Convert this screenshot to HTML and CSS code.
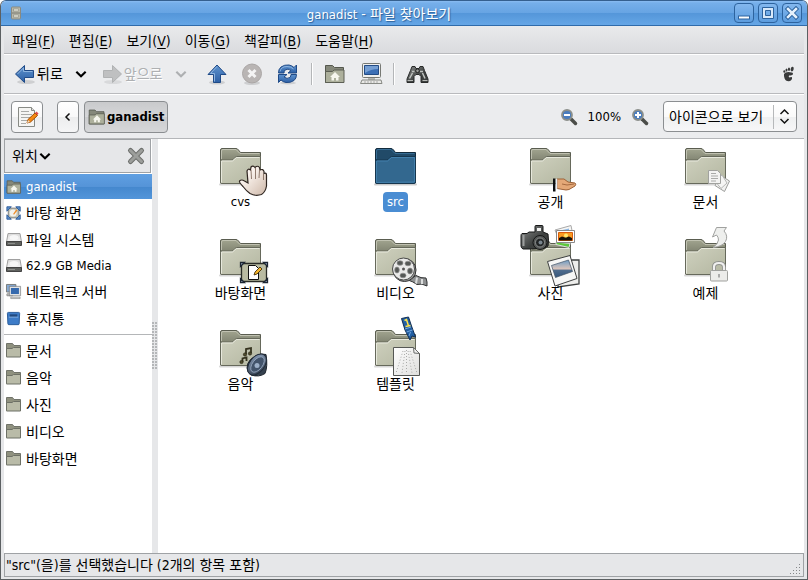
FILE: index.html
```html
<!DOCTYPE html>
<html lang="ko">
<head>
<meta charset="utf-8">
<meta name="viewport" content="width=device-width, initial-scale=1">
<title>ganadist - 파일 찾아보기</title>
<link rel="stylesheet" href="styles.css">
</head>
<body>
<svg class="defs" width="0" height="0" aria-hidden="true">
  <defs>
    <linearGradient id="gFolder" x1="0" y1="0" x2="1" y2="1"><stop offset="0" stop-color="#cfd1bf"/><stop offset="1" stop-color="#b3b6a0"/></linearGradient>
    <linearGradient id="gBack" x1="0" y1="0" x2="0" y2="1"><stop offset="0" stop-color="#a2a590"/><stop offset=".4" stop-color="#7d806e"/></linearGradient>
    <linearGradient id="gBlue" x1="0" y1="0" x2="0" y2="1"><stop offset="0" stop-color="#5f94cf"/><stop offset="1" stop-color="#2c5fa5"/></linearGradient>
    <linearGradient id="gPaper" x1="0" y1="0" x2="1" y2="1"><stop offset="0" stop-color="#fff"/><stop offset="1" stop-color="#dededc"/></linearGradient>
    <linearGradient id="gHand" x1="0" y1="0" x2="1" y2="1"><stop offset=".3" stop-color="#fbf4ee"/><stop offset="1" stop-color="#cdb7a8"/></linearGradient>
    <linearGradient id="gDark" x1="0" y1="0" x2="1" y2="1"><stop offset="0" stop-color="#8b8d8c"/><stop offset=".6" stop-color="#3d403f"/></linearGradient>
    <linearGradient id="gSky" x1="0" y1="0" x2="0" y2="1"><stop offset="0" stop-color="#6d9bc4"/><stop offset=".5" stop-color="#d9c4bb"/><stop offset=".6" stop-color="#4e6b8c"/><stop offset="1" stop-color="#36577d"/></linearGradient>
    <linearGradient id="gSpeaker" x1="0" y1="0" x2="1" y2="1"><stop offset="0" stop-color="#8ea2bd"/><stop offset="1" stop-color="#2b3747"/></linearGradient>
    <linearGradient id="gDrive" x1="0" y1="0" x2="0" y2="1"><stop offset="0" stop-color="#d9d9d9"/><stop offset="1" stop-color="#f6f6f6"/></linearGradient>
  </defs>
  <symbol id="folder" viewBox="0 0 65 53" overflow="visible">
    <path d="M12 45.500h41" stroke="#000" stroke-opacity=".16" stroke-width="2" stroke-linecap="round"/>
    <path d="M12.500 44V11q0-1.500 1.500-1.500h14q1.500 0 2.500 1.500l2 2.500h20V44z" fill="url(#gBack)" stroke="#5a5d50"/>
    <path d="M13.500 20v-8q0-1.500 1.500-1.500h13l4 4h19.500" fill="none" stroke="#c9cbbc" stroke-opacity=".8"/>
    <path d="M12.500 44V22.500q0-1.500 1.500-1.500h9.500q1.500 0 2.500-1.500t2.500-2h24v25q0 2-1.500 2H14q-1.500 0-1.500-1z" fill="url(#gFolder)" stroke="#66695b"/>
    <path d="M13.500 43.500V22h11l4-3.500h23" fill="none" stroke="#e7e8dc"/>
  </symbol>
  <symbol id="folder-selected" viewBox="0 0 65 53" overflow="visible">
    <path d="M12 45.500h41" stroke="#000" stroke-opacity=".2" stroke-width="2" stroke-linecap="round"/>
    <path d="M12.500 44V11q0-1.500 1.500-1.500h14q1.500 0 2.500 1.500l2 2.500h20V44z" fill="#214a68" stroke="#122b3d"/>
    <path d="M13.500 20v-8q0-1.500 1.500-1.500h13l4 4h19.500" fill="none" stroke="#376d95"/>
    <path d="M12.500 44V22.500q0-1.500 1.500-1.500h9.500q1.500 0 2.500-1.500t2.500-2h24v25q0 2-1.500 2H14q-1.500 0-1.500-1z" fill="#33688f" stroke="#16364e"/>
    <path d="M13.500 43.500V22h11l4-3.500h23v24.500z" fill="none" stroke="#427fab"/>
  </symbol>
  <symbol id="mini-folder" viewBox="0 0 16 16">
    <path d="M.5 13.500V.5h6l1.500 2h6.500v11z" fill="#8f917f" stroke="#70736a"/>
    <path d="M.5 13.500v-8h5.500l1.500-1h7v9.500H.5z" fill="#b9bba8" stroke="#6d7066"/>
  </symbol>
  <symbol id="home-folder" viewBox="0 0 22 22">
    <path d="M1.500 19.500v-17h7l2 2h9v15z" fill="#85887a" stroke="#55584e"/>
    <path d="M1.500 19.500v-11h7l1.500-1.500h10v12.500z" fill="#adb09c" stroke="#5c5f54"/>
    <path d="M11 9l5 5h-1.500v3.500h-2.500v-2.500h-2v2.500H7.500V14H6z" fill="#f6f6ee"/>
  </symbol>
  <symbol id="drive" viewBox="0 0 16 16">
    <path d="M2 1.500h12l1.500 8.500H.5z" fill="url(#gDrive)" stroke="#a0a0a0"/>
    <ellipse cx="8" cy="5.500" rx="4.500" ry="2.500" fill="#fafafa" opacity=".8"/>
    <path d="M.5 9.500h15v4H.5z" fill="#60625f" stroke="#444"/>
    <path d="M2 11.500h7" stroke="#8d8f8c"/>
  </symbol>
  <symbol id="chevron" viewBox="0 0 12 12"><path d="M2 4l4 4 4-4" fill="none" stroke="currentColor" stroke-width="1.800"/></symbol>
  <symbol id="arrow-right" viewBox="0 0 24 24">
    <ellipse cx="13" cy="20" rx="9" ry="2" fill="#000" opacity=".08"/>
    <path d="M3.500 8.500h9v-5l9 8.500-9 8.500v-5h-9z" fill="#bfc0c1" stroke="#b0b2b3"/>
  </symbol>
</svg>

<div class="window">
  <header class="titlebar">
    <svg class="app-icon" width="16" height="16" viewBox="0 0 16 16" aria-hidden="true"><rect x="3.500" y="2" width="9" height="12" rx="1" fill="#b9b9ab" stroke="#8a8a80"/><path d="M4 8h8" stroke="#77776d"/><rect x="5.500" y="4" width="5" height="2" fill="#ececdf" stroke="#88887d" stroke-width=".6"/><rect x="5.500" y="10" width="5" height="2" fill="#ececdf" stroke="#88887d" stroke-width=".6"/></svg>
    <h1 class="title"><span class="latin">ganadist</span> - 파일 찾아보기</h1>
    <div class="window-buttons">
      <button type="button" aria-label="최소화"><svg width="18" height="18" viewBox="0 0 18 18"><rect x="3.500" y="12" width="11" height="3" fill="#fff" stroke="#2d639e"/></svg></button>
      <button type="button" aria-label="최대화"><svg width="18" height="18" viewBox="0 0 18 18"><path d="M3.500 3.500h11v11h-11zM6.500 6.500v5h5v-5z" fill="#d8e8f9" fill-rule="evenodd" stroke="#2d639e"/></svg></button>
      <button type="button" aria-label="닫기"><svg width="18" height="18" viewBox="0 0 18 18"><path d="M5 5l8 8M13 5l-8 8" stroke="#2d639e" stroke-width="4.500" stroke-linecap="square"/><path d="M5 5l8 8M13 5l-8 8" stroke="#e4f0fc" stroke-width="2.500" stroke-linecap="square"/></svg></button>
    </div>
  </header>

  <div class="frame">
    <nav class="menubar" aria-label="메뉴">
      <button type="button">파일(<u>F</u>)</button>
      <button type="button">편집(<u>E</u>)</button>
      <button type="button">보기(<u>V</u>)</button>
      <button type="button">이동(<u>G</u>)</button>
      <button type="button">책갈피(<u>B</u>)</button>
      <button type="button">도움말(<u>H</u>)</button>
    </nav>

    <div class="toolbar">
      <button type="button" class="nav-button"><svg width="24" height="24" viewBox="0 0 24 24"><ellipse cx="13" cy="20" rx="9" ry="2" fill="#000" opacity=".12"/><path d="M20.500 8.500h-9v-5L2.500 12l9 8.500v-5h9z" fill="url(#gBlue)" stroke="#1f4a87"/><path d="M4.500 12l6-6v3.500h9" fill="none" stroke="#8db4df"/></svg>뒤로</button>
      <button type="button" class="drop" aria-label="뒤로 기록"><svg width="14" height="14"><use href="#chevron"/></svg></button>
      <button type="button" class="nav-button" disabled><svg width="24" height="24"><use href="#arrow-right"/></svg>앞으로</button>
      <button type="button" class="drop" aria-label="앞으로 기록" disabled><svg width="14" height="14"><use href="#chevron"/></svg></button>
      <button type="button" class="tool" aria-label="위로"><svg width="24" height="24" viewBox="0 0 24 24"><ellipse cx="12" cy="20.500" rx="8" ry="2" fill="#000" opacity=".12"/><path d="M8.500 20.500v-8h-5.500L12 3l9 9.500h-5.500v8z" fill="url(#gBlue)" stroke="#1f4a87"/><path d="M9.500 19.500v-8h-4L12 4.500" fill="none" stroke="#8db4df"/></svg></button>
      <button type="button" class="tool" aria-label="멈춤" disabled><svg width="24" height="24" viewBox="0 0 24 24"><ellipse cx="11" cy="21" rx="8" ry="2" fill="#000" opacity=".12"/><circle cx="11" cy="11.500" r="9.500" fill="#b9b5b4" stroke="#aaa6a5"/><path d="M7.500 8l7 7M14.500 8l-7 7" stroke="#f4f4f4" stroke-width="3"/></svg></button>
      <button type="button" class="tool" aria-label="새로 고침"><svg width="24" height="24" viewBox="0 0 24 24"><ellipse cx="11" cy="21" rx="8" ry="1.500" fill="#000" opacity=".12"/><path d="M1.500 11q0-4 2.500-6 3.500-2.500 8-2 3 .5 5 2.500l2.500-2.500v8h-8.500l3-2.500q-3-2.500-6-.5-1 1.500-1 3z" fill="url(#gBlue)" stroke="#1f4a87"/><path d="M19.500 12.500q0 4-2.500 6-3.500 2.500-8 2-3-.5-5-2.500l-2.500 2.500v-8H10l-3 2.500q3 2.500 6 .5 1-1.500 1-3z" fill="url(#gBlue)" stroke="#1f4a87"/><path d="M3 9.500q1-5 7-5 4 0 6.500 2.500" fill="none" stroke="#8db4df"/></svg></button>
      <span class="separator"></span>
      <button type="button" class="tool" aria-label="내 폴더"><svg width="22" height="22"><use href="#home-folder"/></svg></button>
      <button type="button" class="tool" aria-label="컴퓨터"><svg width="24" height="24" viewBox="0 0 24 24"><rect x="3.500" y="1.500" width="18" height="14" rx="1" fill="#f0f0ee" stroke="#777974"/><path d="M5.500 3.500h14v9h-14z" fill="#3c6fb5" stroke="#244c85"/><path d="M6 4h13v3q-7 0-13 4z" fill="#769fd3"/><path d="M9 16h7v2H9z" fill="#b5b6b2"/><path d="M3 18h19l1 3.500H1.500z" fill="#e9e9e6" stroke="#888a85"/><path d="M5 20h15" stroke="#aaa" stroke-dasharray="2 1"/></svg></button>
      <span class="separator"></span>
      <button type="button" class="tool" aria-label="찾기"><svg width="24" height="24" viewBox="0 0 24 24"><path d="M7 4.500h3l1 2h3l1-2h3l1.500 4 3.500 8.500v3.500h-7v-6l-2-2h-3l-2 2v6H2V17l3.500-8.500z" fill="url(#gDark)" stroke="#292b2a"/><path d="M7 9.500h2.500M15 9.500h3M7.500 11l-3 5.500M17.500 11l2.500 5.500" stroke="#bfc2bf" stroke-width="1.500"/><path d="M2.500 18.500h5.500M17.500 18.500h5" stroke="#b5b7b4"/><circle cx="12.500" cy="8.800" r="1.800" fill="#9b9d9a" stroke="#222"/></svg></button>
      <svg class="foot" width="16" height="16" viewBox="0 0 16 16" aria-hidden="true"><path d="M3 8q1-2 4.500-2 4 0 4.500 1.500.2 2-4 2-.8 1.500.5 2 1.500-1 2.500-.2.500 3-3 4-3.500.2-4.500-3-.800-2.500-.5-4.300z" fill="#3a3b3b"/><ellipse cx="3.300" cy="5.500" rx="1" ry="1.300" fill="#3a3b3b"/><ellipse cx="5.500" cy="4" rx="1" ry="1.500" fill="#3a3b3b"/><ellipse cx="8" cy="3.200" rx="1.100" ry="1.700" fill="#3a3b3b"/><ellipse cx="11.200" cy="3" rx="1.500" ry="2.400" transform="rotate(12 11 3)" fill="#3a3b3b"/></svg>
    </div>

    <div class="locationbar">
      <button type="button" class="box edit" aria-label="위치 편집"><svg width="24" height="24" viewBox="0 0 24 24"><path d="M3.500 2.500h13l3 3v16h-16z" fill="#f5f5f3" stroke="#888a85"/><path d="M16.500 2.500v3h3" fill="#ddd" stroke="#888a85"/><path d="M6 6.500h8M6 9.500h11M6 12.500h10M6 15.500h7M6 18.500h5" stroke="#aaaba8"/><path d="M12 18l1-3.500 7-6.500 2.500 2.500-7 6.500z" fill="#f58a12" stroke="#a14b05"/><path d="M20 8l1.500-1.500 2 2-1 1.500z" fill="#df4a4a"/><path d="M12 18l1-3 2 2z" fill="#f2dfc4"/></svg></button>
      <button type="button" class="box step" aria-label="이전 경로"><svg width="10" height="12" viewBox="0 0 10 12"><path d="M6.500 2.500L3 6l3.500 3.500" fill="none" stroke="#111" stroke-width="1.500"/></svg></button>
      <button type="button" class="box path" aria-pressed="true"><svg width="18" height="18"><use href="#home-folder"/></svg>ganadist</button>
      <div class="zoom">
        <button type="button" class="plain" aria-label="축소"><svg width="18" height="18" viewBox="0 0 18 18"><path d="M11 11l4.500 4.500" stroke="#4b4d49" stroke-width="3.500" stroke-linecap="round"/><circle cx="7" cy="7" r="5" fill="#4a7dbf" stroke="#8b8f8a" stroke-width="1.800"/><path d="M4 7h6" stroke="#fff" stroke-width="2"/></svg></button>
        <output>100%</output>
        <button type="button" class="plain" aria-label="확대"><svg width="18" height="18" viewBox="0 0 18 18"><path d="M11 11l4.500 4.500" stroke="#4b4d49" stroke-width="3.500" stroke-linecap="round"/><circle cx="7" cy="7" r="5" fill="#4a7dbf" stroke="#8b8f8a" stroke-width="1.800"/><path d="M4 7h6M7 4v6" stroke="#fff" stroke-width="2"/></svg></button>
      </div>
      <label class="view-select">
        <select aria-label="보기 방식"><option>아이콘으로 보기</option><option>목록으로 보기</option></select>
        <svg width="24" height="24" viewBox="0 0 24 24" aria-hidden="true"><path d="M1.500 0v24" stroke="#b6b8ba"/><path d="M8.500 9l4-4 4 4M8.500 14l4 4 4-4" fill="none" stroke="#111" stroke-width="1.500"/></svg>
      </label>
    </div>

    <div class="panes">
      <aside class="sidebar">
        <div class="side-header">
          <button type="button" class="plain places">위치<svg width="14" height="14"><use href="#chevron"/></svg></button>
          <button type="button" class="plain" aria-label="가장자리 창 닫기"><svg width="18" height="18" viewBox="0 0 18 18"><path d="M3.500 3.500l11 11M14.500 3.500l-11 11" stroke="#6d6f6c" stroke-width="5" stroke-linecap="round"/><path d="M3.500 3.500l11 11M14.500 3.500l-11 11" stroke="#9c9e9b" stroke-width="3" stroke-linecap="round"/></svg></button>
        </div>
        <ul class="places-list">
          <li><a href="#" class="short selected"><svg width="16" height="16"><use href="#home-folder"/></svg><span class="latin">ganadist</span></a></li>
          <li><a href="#"><svg width="16" height="16" viewBox="0 0 18 18"><rect x="2.500" y="3.500" width="12" height="11" fill="#c3c4b6" stroke="#777"/><circle cx="8" cy="9" r="4" fill="#f2f2ee"/><path d="M8 10l3.500-5 1.500 1-4 5z" fill="#f08a24"/><path d="M1 2h5L1 7zM16 2v5l-5-5zM1 16v-5l5 5zM16 16h-5l5-5z" fill="#5b8cc9" stroke="#2b5a98"/></svg>바탕 화면</a></li>
          <li><a href="#"><svg width="16" height="16"><use href="#drive"/></svg>파일 시스템</a></li>
          <li><a href="#" class="short"><svg width="16" height="16"><use href="#drive"/></svg><span class="latin">62.9 GB Media</span></a></li>
          <li><a href="#"><svg width="16" height="16" viewBox="1 1 17 17"><path d="M1.500 1.500h10v8h-10z" fill="#84a9d4" stroke="#777a78"/><path d="M2 11.500h6v2H2z" fill="#d8d8d6" stroke="#888"/><path d="M5.500 4.500h10v8h-10z" fill="#3569ad" stroke="#e0e2e3" stroke-width="1.500"/><path d="M4.500 3.500h12v10h-12z" fill="none" stroke="#6f7375" stroke-width=".7"/><path d="M6 15h10v1.500H6z" fill="#ddd" stroke="#858785" stroke-width=".7"/></svg>네트워크 서버</a></li>
          <li><a href="#"><svg width="16" height="16" viewBox="1 1 17 17"><path d="M2.500 3.500q0-1 1-1h11q1 0 1 1l-.500 11q0 1-1 1H4q-1 0-1-1z" fill="#3d7cc8" stroke="#285a97"/><path d="M5 4.500h8v3H5z" fill="#214a80"/><path d="M4 7.500h10" stroke="#86b2e4"/></svg>휴지통</a></li>
        </ul>
        <ul class="places-list bookmarks">
          <li><a href="#"><svg width="16" height="16"><use href="#mini-folder"/></svg>문서</a></li>
          <li><a href="#"><svg width="16" height="16"><use href="#mini-folder"/></svg>음악</a></li>
          <li><a href="#"><svg width="16" height="16"><use href="#mini-folder"/></svg>사진</a></li>
          <li><a href="#"><svg width="16" height="16"><use href="#mini-folder"/></svg>비디오</a></li>
          <li><a href="#"><svg width="16" height="16"><use href="#mini-folder"/></svg>바탕화면</a></li>
        </ul>
      </aside>
      <div class="splitter"><span class="grip"></span></div>

      <main class="files">
        <a href="#" class="file"><svg width="65" height="53" viewBox="0 0 65 53"><use href="#folder"/>
          <path d="M42 54.500q-4-3-7-7-4-4-3.500-5.500 2-2 5 0l3.500 2-1-12q1-3 3.500-1l.500-3q2-2 4 .5 2.500-2.500 4.500 0l.5 2.500q3-1.500 4 1.500v2q2.500-1 2.500 1.500v11q-1 6-5 8.500-6 2-11.500-1z" fill="url(#gHand)" stroke="#2f2621" stroke-width="1.200"/><path d="M43 31l.5 9M47.500 29v11M51.500 31l-.500 8M55.500 35v6" stroke="#8f7a6d" fill="none"/></svg><span class="name latin">cvs</span></a>
        <a href="#" class="file selected"><svg width="65" height="53"><use href="#folder-selected"/></svg><span class="name latin">src</span></a>
        <a href="#" class="file"><svg width="65" height="53" viewBox="0 0 65 53"><use href="#folder"/>
          <path d="M39 40h7l4 3 7 1q1.500 1 0 3l-6 3.500q-3 1-6 0l-6-1z" fill="#e4a877" stroke="#9d6238"/><path d="M44 45q4 2 12 0" fill="none" stroke="#a66a40"/><path d="M35 39.500h2.500v13H35z" fill="#0e1012"/><path d="M38.500 40v10" stroke="#e8eff6" stroke-width="1.500"/></svg><span class="name">공개</span></a>
        <a href="#" class="file"><svg width="65" height="53" viewBox="0 0 65 53"><use href="#folder"/>
          <path d="M48.500 37l8 5-5 10.500-9.500-6z" fill="#f2f2f1" stroke="#9b9c9a"/><path d="M42 42l7-6 5 8-6 5.500z" fill="#f5f5f4" stroke="#b5b6b4"/><path d="M35.500 31.500h9l3 3v10h-12z" fill="#f3f3f2" stroke="#a1a29f"/><path d="M38 34.500h5M38 37h7M38 39.500h7M38 42h5" stroke="#a9aaa8"/></svg><span class="name">문서</span></a>
        <a href="#" class="file"><svg width="65" height="53" viewBox="0 0 65 53"><use href="#folder"/>
          <rect x="33.500" y="33.500" width="25" height="18" rx="1" fill="#b9bba2" stroke="#2a2c27" stroke-width="1.300"/><path d="M32.500 32.500h4l-4 4zM59.500 32.500v4l-4-4zM32.500 52.500v-4l4 4zM59.500 52.500h-4l4-4z" fill="#a9bad2" stroke="#1c2532" stroke-width="1.300"/><path d="M40.500 35.500h7l3 3v11h-10z" fill="#fff" stroke="#111"/><path d="M46 45l1-3 5-5 2 2-5 5z" fill="#f3b32a" stroke="#332100" stroke-width=".8"/></svg><span class="name">바탕화면</span></a>
        <a href="#" class="file"><svg width="65" height="53" viewBox="0 0 65 53"><use href="#folder"/>
          <path d="M45 50q5-2 8-4.500 5 3 10 2.500 1.500 4 1 8-5-3-10-1.500-4-3-9-4.500z" fill="#8f9192" stroke="#2f3132"/><path d="M54 47.500l-1 6M59 49v5" stroke="#dcdede" stroke-width="2"/><circle cx="41.500" cy="40" r="11.500" fill="#9a9c9b" stroke="#333"/><circle cx="40.500" cy="39" r="11" fill="#e9e9e8" stroke="#4a4b4a"/><g fill="#555856" stroke="#90918f" stroke-width=".7"><ellipse cx="37" cy="33" rx="3" ry="2.300"/><ellipse cx="45" cy="33.500" rx="3" ry="2.300"/><ellipse cx="47" cy="41" rx="2.500" ry="3"/><ellipse cx="40" cy="45.500" rx="3" ry="2.300"/><ellipse cx="34" cy="40" rx="2.300" ry="3"/></g><circle cx="40.500" cy="39" r="1.500" fill="#555"/></svg><span class="name">비디오</span></a>
        <a href="#" class="file"><svg width="65" height="53" viewBox="0 0 65 53"><use href="#folder"/>
          <path d="M37 0l16-4.500 3 15-13 4z" fill="#f6f6f5" stroke="#aaa"/><path d="M40 1l11-2.500v4H40z" fill="#8fb7e2"/><path d="M38 12l14 1.500-1 4-13-3z" fill="#5ec73c" stroke="#ddd"/><path d="M38.500 .5h18v12h-18z" fill="#fff" stroke="#888"/><path d="M40.500 2.500h14v8h-14z" fill="#f89a21" stroke="#d95c0c"/><path d="M41 8l3-1.500 3 1 4-1 3 1.500v2.500H41z" fill="#161207"/><circle cx="48" cy="5.500" r="2" fill="#ffe96b"/>
          <path d="M4 3.500h5l2-1.500h6v-5.500q0-1 1-1h6q1 0 1 1V2l5 2q1 7 0 12l-3 2-15 1H5q-2-1-2-3V6q0-2 1-2.500z" fill="url(#gDark)" stroke="#171818"/><path d="M19 -2h4v3h-4z" fill="#f0f1f0"/><path d="M5.500 5v11" stroke="#9c9e9d" stroke-width="2"/><circle cx="22" cy="12.500" r="7" fill="#555857" stroke="#161717"/><circle cx="22" cy="12.500" r="4.500" fill="#222526" stroke="#8b8e8d"/><circle cx="22.500" cy="12.500" r="2" fill="#79858e"/>
          <path d="M39 30h22v24l-21 3z" fill="#ededeb" stroke="#3e4040" stroke-width="1.300"/><path d="M29.500 31.500l22.500-6 7 23-22 7.500z" fill="#f7f7f6" stroke="#3e4040"/><path d="M33.500 35.500l17-5.500 4 11.500-17 6z" fill="url(#gSky)" stroke="#425264" stroke-width=".7"/></svg><span class="name">사진</span></a>
        <a href="#" class="file"><svg width="65" height="53" viewBox="0 0 65 53"><use href="#folder"/>
          <path d="M43.500 -2.500h10l-2.500 3.500q4.500 5 1.500 10.500-3 5-12.500 6 5-3.500 5.500-7.500 0-3-2-5l-4 2z" fill="#eeefed" stroke="#a0a19f"/><path d="M41 41v-4q0-4 5-4t5 4v4" fill="none" stroke="#8f918d" stroke-width="4"/><path d="M41 41v-4q0-4 5-4t5 4v4" fill="none" stroke="#f0f0ef" stroke-width="2.200"/><rect x="37.500" y="40.500" width="17" height="10.500" rx="1" fill="#ececea" stroke="#a0a19e"/><path d="M46 44v3.500" stroke="#aaa" stroke-width="2"/></svg><span class="name">예제</span></a>
        <a href="#" class="file"><svg width="65" height="53" viewBox="0 0 65 53"><use href="#folder"/>
          <path d="M38 33v-5l5-1v5M34.500 41v-3.500l4-1v3.500" fill="none" stroke="#35331f" stroke-width="1.800"/><g fill="#4e4b2b" stroke="#2c2a18" stroke-width=".8"><circle cx="37" cy="33.500" r="1.600"/><circle cx="42" cy="32.500" r="1.600"/><circle cx="33.500" cy="41" r="1.600"/></g><path d="M39 47q0-10 14-14l5 .5q2 12-1 19-6 4-14 1.500-4-3-4-7z" fill="#35414f" stroke="#1c232c"/><ellipse cx="49" cy="43.500" rx="7.500" ry="12" transform="rotate(38 49 43.500)" fill="url(#gSpeaker)" stroke="#222c3a"/><ellipse cx="49.500" cy="43.500" rx="5" ry="9" transform="rotate(38 49.500 43.500)" fill="#43546b" stroke="#9aabc3" stroke-width=".8"/><circle cx="49" cy="44.500" r="2.500" fill="#9cafc8"/></svg><span class="name">음악</span></a>
        <a href="#" class="file"><svg width="65" height="53" viewBox="0 0 65 53"><use href="#folder"/>
          <path d="M38.500 -2.500l7-1.500 3 9 4 11-3.500-1-2 4-5-10z" fill="#2360a4" stroke="#0f2d54"/><path d="M42 8l6-2M43.500 11l6-2M46 15l1.500-4" stroke="#74a6df"/><path d="M41.500 -.500l2-1 2 6.500M42.500 5.500l5-1" stroke="#ffe24a" stroke-width="1.500" fill="none"/>
          <path d="M30.500 26.500h20l6 6v22h-26z" fill="url(#gPaper)" stroke="#555754"/><path d="M50.500 26.500l.5 5.500 5.500.5z" fill="#eee" stroke="#6b6d6a"/><path d="M43.500 29v24M40 30l-7 22M47 30l7 22M42 30l-3 22M45 30l4 22" stroke="#a9aaa8" stroke-dasharray="1 2"/></svg><span class="name">템플릿</span></a>
      </main>
    </div>

    <footer class="statusbar"><span>"src"(을)를 선택했습니다 (2개의 항목 포함)</span>
      <svg width="12" height="12" viewBox="0 0 12 12" aria-hidden="true"><path d="M9 1h1v1H9zM6 4h1v1H6zM9 4h1v1H9zM3 7h1v1H3zM6 7h1v1H6zM9 7h1v1H9zM0 10h1v1H0zM3 10h1v1H3zM6 10h1v1H6zM9 10h1v1H9z" fill="#85888a"/></svg>
    </footer>
  </div>
</div>
</body>
</html>
```
FILE: styles.css
```css
* { box-sizing: border-box; }

body {
  margin: 0;
  background: #fff;
  color: #000;
  font: 14px/20px "DejaVu Sans Condensed", "Noto Sans CJK KR", sans-serif;
}

button {
  display: inline-flex;
  align-items: center;
  justify-content: center;
  margin: 0;
  padding: 0;
  border: 0;
  background: none;
  color: inherit;
  font: inherit;
}

svg { display: block; flex: none; overflow: visible; }
a { color: inherit; text-decoration: none; }
.defs { position: absolute; }
.latin { font-size: 13px; }

.window {
  display: flex;
  flex-direction: column;
  min-height: 100vh;
  border: 1px solid #5c6062;
  border-top-color: #35608f;
  border-radius: 6px 6px 0 0;
  background: #e6e7e9;
  overflow: hidden;
}

/* Title bar */
.titlebar {
  display: flex;
  align-items: center;
  height: 25px;
  padding: 0 5px 0 7px;
  border-bottom: 1px solid #2f6baa;
  background: linear-gradient(#8abcf2 0, #76afea 2px, #67a4e3 12px, #5496d9 12px, #65a6e6 100%);
}
.title {
  flex: 1;
  margin: 0;
  padding-top: 2px;
  color: #fff;
  font-size: 14px;
  font-weight: 400;
  text-align: center;
  text-shadow: 1px 1px 1px #2c5f98;
}
.window-buttons { display: flex; gap: 4px; }
.window-buttons button {
  width: 20px;
  height: 20px;
  border: 1px solid #2d639e;
  border-radius: 4px;
  background: linear-gradient(#83b7ee, #5c9cde);
}

.frame {
  display: flex;
  flex: 1;
  flex-direction: column;
  padding: 0 3px 2px;
}

/* Menu bar */
.menubar {
  display: flex;
  gap: 14px;
  height: 28px;
  padding: 2px 8px 0;
  border-bottom: 1px solid #b9babd;
  background: linear-gradient(#e9eaec, #dadbde);
}
.menubar u { text-underline-offset: 2px; }

/* Tool bar */
.toolbar {
  display: flex;
  align-items: center;
  height: 40px;
  padding: 0 7px 0 9px;
  border-top: 1px solid #fff;
  border-bottom: 1px solid #b9babd;
  background: #ebecee;
}
.toolbar button { height: 32px; }
.toolbar button:disabled { color: #aeb0b2; text-shadow: 1px 1px 0 #fff; }
.drop { width: 37px; }
.tool { width: 36px; }
.separator {
  width: 2px;
  height: 22px;
  margin: 0 4px;
  border-left: 1px solid #b4b6b8;
  background: #fff;
}
.foot { margin-left: auto; }

/* Location bar */
.locationbar {
  display: flex;
  align-items: center;
  height: 45px;
  padding: 0 7px;
  border-top: 1px solid #fff;
  border-bottom: 1px solid #b4b6b9;
  background: #ebecee;
}
.box {
  height: 32px;
  border: 1px solid #8b8e91;
  border-radius: 4px;
  background: linear-gradient(#fff 0, #f8f8f9 50%, #ecedee 50%, #f5f5f6 100%);
}
.edit { width: 32px; }
.step { width: 22px; margin: 0 5px 0 14px; }
.path {
  gap: 1px;
  padding: 0 3px;
  background: linear-gradient(#c9cacc 0, #d6d7d9 50%, #cbccce 50%, #d6d7d9 100%);
  font-size: 13px;
  font-weight: 700;
}
.zoom {
  display: flex;
  align-items: center;
  gap: 10px;
  margin-left: auto;
  margin-right: 14px;
  font-size: 13px;
}
.view-select { position: relative; width: 134px; }
.view-select select {
  width: 100%;
  height: 31px;
  margin: 0;
  padding: 0 0 0 5px;
  border: 1px solid #8b8e91;
  border-radius: 4px;
  appearance: none;
  background: linear-gradient(#fff 0, #fafafa 50%, #eeeff0 50%, #f7f7f8 100%);
  color: #000;
  font: inherit;
}
.view-select svg {
  position: absolute;
  top: 4px;
  right: 1px;
  pointer-events: none;
}

/* Panes */
.panes { display: flex; flex: 1; background: #fff; }
.sidebar { flex: none; width: 148px; }
.side-header {
  display: flex;
  align-items: center;
  justify-content: space-between;
  height: 34px;
  margin: 0 1px 1px 0;
  padding: 0 5px 0 7px;
  border: 1px solid #9fa2a5;
  background: #e6e7e9;
}
.places-list { margin: 0; padding: 0; list-style: none; }
.places-list a {
  display: flex;
  align-items: center;
  gap: 4px;
  height: 27px;
  padding-left: 2px;
}
.places-list .short { height: 25px; }
.places-list .selected {
  background: linear-gradient(#5f9fe2 0, #5594d8 50%, #4487cd 50%, #5295da 100%);
  color: #fff;
}
.bookmarks {
  margin-top: 2px;
  padding-top: 2px;
  border-top: 1px solid #b4b6b8;
}
.splitter {
  display: flex;
  flex: none;
  align-items: center;
  width: 6px;
  background: #e6e7e9;
}
.grip {
  width: 6px;
  height: 48px;
  background: radial-gradient(circle at 1px 1px, #b4b6b8 0, #b4b6b8 1px, transparent 1px) 0 0 / 3px 3px;
}

/* Icon view */
.files {
  display: grid;
  flex: 1;
  grid-template-columns: repeat(auto-fill, 155px);
  grid-auto-rows: 91px;
  align-content: start;
  padding-left: 5px;
}
.file {
  display: flex;
  flex-direction: column;
  align-items: center;
}
.name {
  padding: 0 4px;
  border-radius: 4px;
}
.file.selected .name { background: #4a8dd3; color: #fff; }

/* Status bar */
.statusbar {
  display: flex;
  align-items: flex-end;
  justify-content: space-between;
  height: 24px;
  padding: 0 1px 1px;
  border: 1px solid #9fa2a5;
  background: #e6e7e9;
}
```
